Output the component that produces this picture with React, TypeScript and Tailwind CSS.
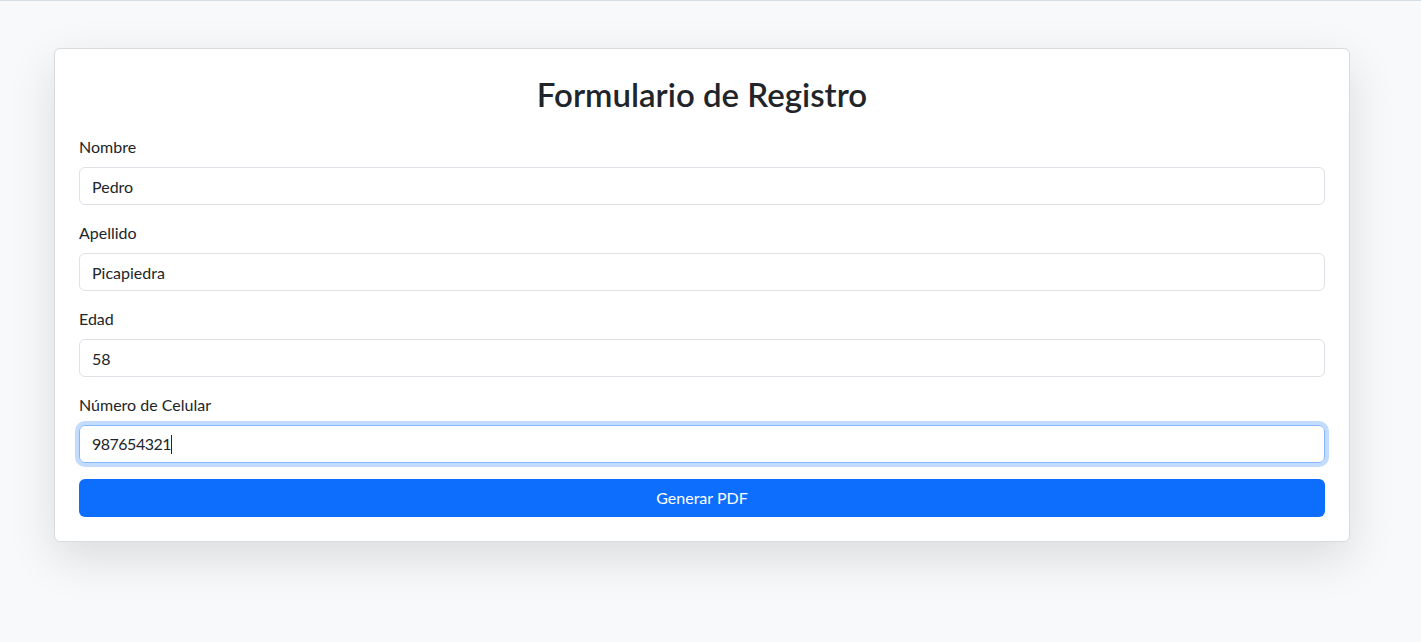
const fields = [
  { label: "Nombre", value: "Pedro" },
  { label: "Apellido", value: "Picapiedra" },
  { label: "Edad", value: "58" },
];

export default function App() {
  return (
    <div
      className="min-h-[642px] bg-[#f8f9fa] border-t border-[#d6dee8] text-[#212529]"
      style={{ fontFamily: '"Lato", "Noto Sans", sans-serif' }}
    >
      <div className="pt-[47px] pl-[54px]">
        <div className="w-[1296px] bg-white border border-[#d9dadb] rounded-md shadow-[0_16px_48px_rgba(0,0,0,0.12)]">
          <div className="p-6">
            <h2 className="text-center text-[33px] font-semibold leading-[38px] pt-[2px] mb-[22px]">
              Formulario de Registro
            </h2>
            {fields.map((f) => (
              <div key={f.label} className="mb-4">
                <label className="block text-base leading-6 mb-2">{f.label}</label>
                <input
                  readOnly
                  defaultValue={f.value}
                  className="block w-full h-[38px] px-3 text-base border border-[#dee2e6] rounded-md outline-none caret-transparent"
                />
              </div>
            ))}
            <div className="mb-4">
              <label className="block text-base leading-6 mb-2">Número de Celular</label>
              <div className="flex items-center w-full h-[38px] px-3 text-base border border-[#86b7fe] rounded-md shadow-[0_0_0_4px_rgba(13,110,253,0.25)]">
                <span className="tracking-[-0.5px]">987654321</span>
                <span className="w-px h-[19px] bg-[#212529]" />
              </div>
            </div>
            <button className="block w-full h-[38px] bg-[#0d6efd] text-white text-base rounded-md">
              Generar PDF
            </button>
          </div>
        </div>
      </div>
    </div>
  );
}
